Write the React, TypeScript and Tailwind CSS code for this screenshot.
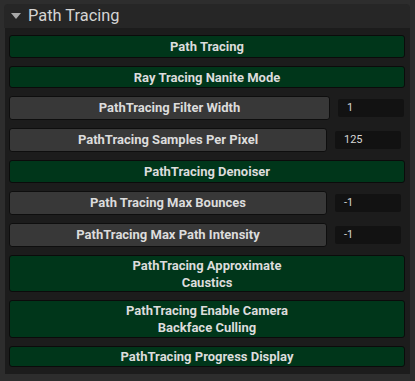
import React from 'react';

type Row =
  | { kind: 'toggle'; label: string[]; h: number }
  | { kind: 'value'; label: string; value: string; h: number; wide?: boolean };

const ROWS: Row[] = [
  { kind: 'toggle', label: ['Path Tracing'], h: 23 },
  { kind: 'toggle', label: ['Ray Tracing Nanite Mode'], h: 22 },
  { kind: 'value', label: 'PathTracing Filter Width', value: '1', h: 24, wide: true },
  { kind: 'value', label: 'PathTracing Samples Per Pixel', value: '125', h: 24 },
  { kind: 'toggle', label: ['PathTracing Denoiser'], h: 23 },
  { kind: 'value', label: 'Path Tracing Max Bounces', value: '-1', h: 24 },
  { kind: 'value', label: 'PathTracing Max Path Intensity', value: '-1', h: 24 },
  { kind: 'toggle', label: ['PathTracing Approximate', 'Caustics'], h: 37 },
  { kind: 'toggle', label: ['PathTracing Enable Camera', 'Backface Culling'], h: 38 },
  { kind: 'toggle', label: ['PathTracing Progress Display'], h: 21 },
];

const App: React.FC = () => {
  return (
    <div
      className="w-[415px] h-[381px] bg-[#2d2d2d] pl-[4px] pr-[5px] pt-[4px] pb-[7px] flex flex-col overflow-hidden"
      style={{ fontFamily: 'Roboto, "Noto Sans", sans-serif' }}
    >
      {/* Header */}
      <div className="h-[24px] shrink-0 bg-[#262626] rounded-t-[4px] flex items-center pl-[7px] gap-[7px]">
        <svg width="10" height="6" viewBox="0 0 10 6">
          <path d="M0 0 L10 0 L5 6 Z" fill="#a8a8a8" />
        </svg>
        <span className="text-[16.4px] text-[#d4d4d4] leading-none">Path Tracing</span>
      </div>

      {/* Body */}
      <div className="flex-1 bg-[#1c1c1c] ml-[1px] pl-[4px] pr-[5px] pt-[7px] flex flex-col gap-[8px]">
        {ROWS.map((row, i) =>
          row.kind === 'toggle' ? (
            <div
              key={i}
              style={{ height: row.h }}
              className="shrink-0 bg-[#00361a] border border-[#0b0b0b] rounded-[3px] flex flex-col items-center justify-center text-[13px] font-bold text-[#dcdcdc] leading-[17px]"
            >
              {row.label.map((l) => (
                <span key={l}>{l}</span>
              ))}
            </div>
          ) : (
            <div key={i} style={{ height: row.h }} className="shrink-0 flex items-center">
              <div
                className={`h-full ${row.wide ? 'w-[321px]' : 'w-[318px]'} bg-[#383838] border border-[#0e0e0e] rounded-[3px] flex items-center justify-center text-[13px] font-bold text-[#dcdcdc]`}
              >
                {row.label}
              </div>
              <div className="ml-[8px] h-[18px] w-[66px] bg-[#121212] rounded-[2px] flex items-center pl-[9px] text-[11px] text-[#d6d6d6]">
                {row.value}
              </div>
            </div>
          )
        )}
      </div>
    </div>
  );
};

export default App;
